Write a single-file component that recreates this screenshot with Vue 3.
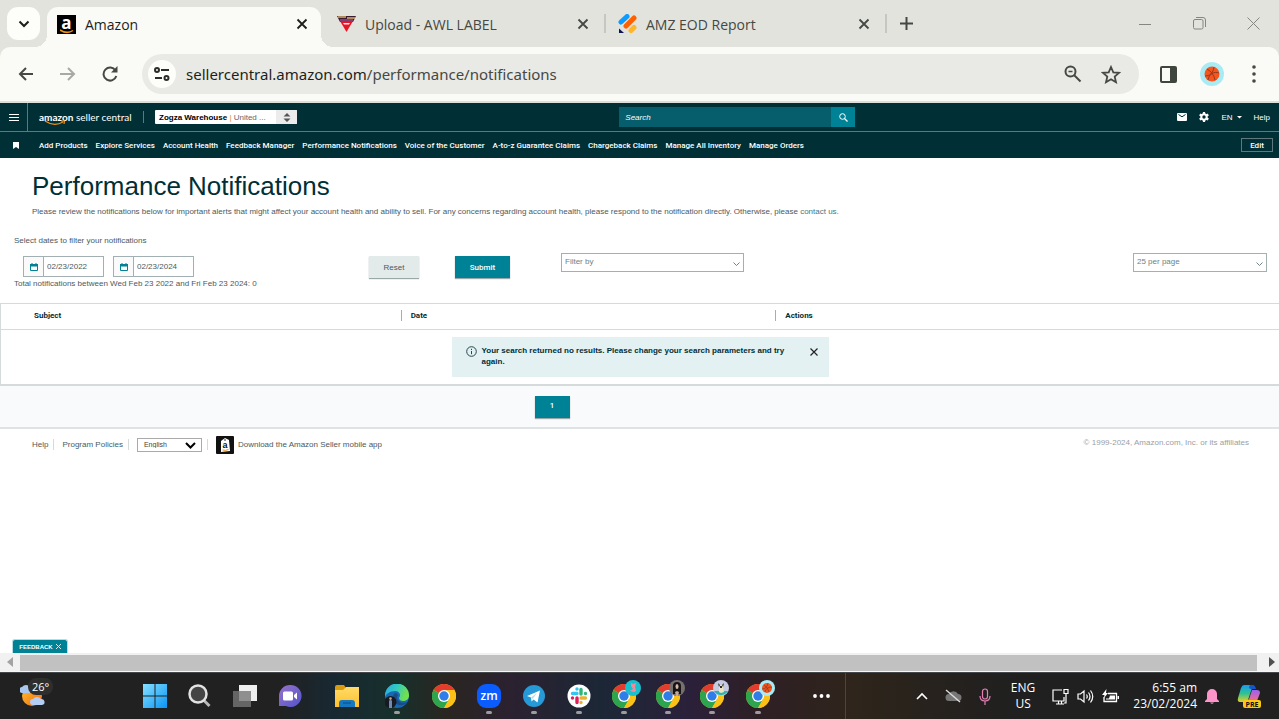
<script setup>
import { ref } from 'vue'

const navLinks = [
  'Add Products', 'Explore Services', 'Account Health', 'Feedback Manager',
  'Performance Notifications', 'Voice of the Customer', 'A-to-z Guarantee Claims',
  'Chargeback Claims', 'Manage All Inventory', 'Manage Orders'
]
const profiles = ['pig', 'girl', 'dog', 'ball']
const url = ref('sellercentral.amazon.com/performance/notifications')
const fromDate = ref('02/23/2022')
const toDate = ref('02/23/2024')
</script>

<template>
  <div class="screen">
    <header class="tabs">
      <button class="tab-search" aria-label="Search tabs">
        <svg width="12" height="8" viewBox="0 0 12 8"><path d="M1.5 1.5 6 6l4.500-4.500" fill="none" stroke="#1d1f1c" stroke-width="2" /></svg>
      </button>
      <div class="tab active">
        <span class="fav-a">a<svg width="15" height="5" viewBox="0 0 15 5"><path d="M0 1Q7 5.500 13 1.500" fill="none" stroke="#f29111" stroke-width="1.500" /></svg></span>
        <span class="tab-title">Amazon</span>
        <button class="x" aria-label="Close tab"><svg width="12" height="12" viewBox="0 0 12 12"><path d="m1.500 1.500 9 9m0-9-9 9" stroke="#1d1f1c" stroke-width="1.800" /></svg></button>
      </div>
      <div class="tab second">
        <svg class="fav" width="19" height="19" viewBox="0 0 19 19"><path d="M0 1h19l-3 6H3z" fill="#3b1c2e" /><path d="M1 2h8M10 3h8" stroke="#d8b072" stroke-width="1.500" /><path d="M3 5h13" stroke="#b455a0" stroke-width="1.200" /><path d="M3 6h13l-6.500 11z" fill="#ea1427" /><path d="M6 8h7l-1 1.500H7z" fill="#f7e9f0" /></svg>
        <span class="tab-title">Upload - AWL LABEL</span>
        <button class="x" aria-label="Close tab"><svg width="12" height="12" viewBox="0 0 12 12"><path d="m1.500 1.500 9 9m0-9-9 9" stroke="#454844" stroke-width="1.800" /></svg></button>
      </div>
      <i class="tab-sep"></i>
      <div class="tab third">
        <svg class="fav" width="19" height="20" viewBox="0 0 19 20"><g stroke-width="5" stroke-linecap="round"><path d="m3 8 6-5.500" stroke="#0c9cff" /><path d="m8 12 8-8" stroke="#ff6100" /><path d="m13 16.500 3-3" stroke="#ffb629" /></g><path d="M1 14.500 6 19H1z" fill="#0a1551" /></svg>
        <span class="tab-title">AMZ EOD Report</span>
        <button class="x" aria-label="Close tab"><svg width="12" height="12" viewBox="0 0 12 12"><path d="m1.500 1.500 9 9m0-9-9 9" stroke="#454844" stroke-width="1.800" /></svg></button>
      </div>
      <i class="tab-sep"></i>
      <button class="new-tab" aria-label="New tab"><svg width="13" height="13" viewBox="0 0 13 13"><path d="M6.500 0v13M0 6.500h13" stroke="#454844" stroke-width="2" /></svg></button>
      <div class="win">
        <button aria-label="Minimize"><svg width="13" height="13" viewBox="0 0 13 13"><path d="M0 7.500h12" stroke="#858682" /></svg></button>
        <button aria-label="Restore"><svg width="13" height="13" viewBox="0 0 13 13"><rect x="0.500" y="2.500" width="9.500" height="9.500" rx="1.500" fill="none" stroke="#858682" /><path d="M3 .5h7a2.500 2.500 0 0 1 2.500 2.500v7" fill="none" stroke="#858682" /></svg></button>
        <button aria-label="Close"><svg width="13" height="13" viewBox="0 0 13 13"><path d="m.5.500 12 12m0-12-12 12" stroke="#858682" /></svg></button>
      </div>
    </header>

    <div class="toolbar-back">
      <div class="toolbar">
        <button aria-label="Back"><svg width="16" height="14" viewBox="0 0 16 14"><path d="M15 7H2M8 1 2 7l6 6" fill="none" stroke="#454844" stroke-width="2" /></svg></button>
        <button aria-label="Forward"><svg width="16" height="14" viewBox="0 0 16 14"><path d="M0 7h14M8 1l6 6-6 6" fill="none" stroke="#a8a9a5" stroke-width="2" /></svg></button>
        <button class="reload" aria-label="Reload"><svg width="16" height="16" viewBox="0 0 16 16"><path d="M13.500 4.500A6.500 6.500 0 1 0 14.300 10" fill="none" stroke="#454844" stroke-width="2" /><path d="M15.500 0v6.500H9z" fill="#454844" /></svg></button>
        <div class="omnibox">
          <button class="site" aria-label="Site information"><svg width="16" height="14" viewBox="0 0 16 14"><g fill="none" stroke="#2b2d2a" stroke-width="2"><circle cx="3" cy="3" r="2" /><path d="M7 3h8M1 11h7" /><circle cx="12.500" cy="11" r="2" /></g></svg></button>
          <label class="url"><span>sellercentral.amazon.com</span>/performance/notifications<input v-model="url" aria-label="Address" /></label>
          <button aria-label="Zoom"><svg width="18" height="18" viewBox="0 0 18 18"><g fill="none" stroke="#454844" stroke-width="2"><circle cx="6.500" cy="6.500" r="5" /><path d="m10 10 6.500 6.500" /><path d="M4.500 6.500h4" stroke-width="1.500" /></g></svg></button>
          <button aria-label="Bookmark"><svg width="20" height="19" viewBox="0 0 20 19"><path d="m10 2 2.300 5.300 5.700.500-4.300 3.800 1.300 5.600-5-3-5 3 1.300-5.600L2 7.800l5.700-.5z" fill="none" stroke="#454844" stroke-width="1.800" /></svg></button>
        </div>
        <button class="panel" aria-label="Side panel"><svg width="17" height="17" viewBox="0 0 17 17"><rect x="1" y="1" width="15" height="15" rx="1" fill="none" stroke="#3f463e" stroke-width="2" /><path d="M10 1h6v15h-6z" fill="#3f463e" /></svg></button>
        <button class="avatar" aria-label="Profile"><svg width="24" height="24" viewBox="0 0 24 24"><circle cx="12" cy="12" r="12" fill="#a9ebf4" /><circle cx="12" cy="12" r="7.500" fill="#f4561d" /><path d="M5 14c5 0 8-3 9-9M8 18c1-6 6-9 11-7M7 7c4 2 7 6 8 11" fill="none" stroke="#8a3520" stroke-width="0.900" /></svg></button>
        <button class="kebab" aria-label="Menu"><svg width="4" height="18" viewBox="0 0 4 18"><g fill="#454844"><circle cx="2" cy="2" r="1.800" /><circle cx="2" cy="9" r="1.800" /><circle cx="2" cy="16" r="1.800" /></g></svg></button>
      </div>
    </div>

    <main class="page">
      <div class="sc-top">
        <button class="burger" aria-label="Menu"><svg width="10" height="7" viewBox="0 0 10 7"><path d="M0 .5h10M0 3.500h10M0 6.500h10" stroke="#fff" /></svg></button>
        <a class="logo" href="#"><b>amazon</b> seller central<svg width="22" height="6" viewBox="0 0 22 6"><path d="M1 1q9 6 18 1M17 1h3.500L20 4" fill="none" stroke="#f29111" stroke-width="1.200" /></svg></a>
        <i class="bar"></i>
        <button class="store"><span class="store-name"><b>Zogza Warehouse</b> <em>|</em> United ...</span><span class="updown"><svg width="8" height="9" viewBox="0 0 8 9"><path d="M4 0l3.500 3.500h-7zM4 9 .5 5.500h7z" fill="#555" /></svg></span></button>
        <form class="search" @submit.prevent>
          <input placeholder="Search" aria-label="Search" />
          <button aria-label="Submit search"><svg width="9" height="9" viewBox="0 0 9 9"><circle cx="3.500" cy="3.500" r="2.800" fill="none" stroke="#fff" /><path d="m5.500 5.500 3 3" stroke="#fff" stroke-width="1.200" /></svg></button>
        </form>
        <div class="tools">
          <a href="#" aria-label="Messages"><svg width="10" height="8" viewBox="0 0 10 8"><rect width="10" height="8" rx="1" fill="#fff" /><path d="m1.500 1.500 3.500 2.300 3.500-2.300" fill="none" stroke="#002f36" /></svg></a>
          <a href="#" aria-label="Settings"><svg width="10" height="10" viewBox="0 0 10 10"><circle cx="5" cy="5" r="2.700" fill="none" stroke="#fff" stroke-width="2" /><path d="M5 0v2M5 8v2M.7 2.500l1.700 1M7.600 6.500l1.700 1M.7 7.500l1.700-1M7.600 3.500l1.700-1" stroke="#fff" stroke-width="2.200" /></svg></a>
          <button class="lang">EN <svg width="5" height="3" viewBox="0 0 5 3"><path d="M0 0h5L2.500 2.500z" fill="#fff" /></svg></button>
          <a href="#">Help</a>
        </div>
      </div>
      <nav class="sc-nav">
        <span class="mark"><svg width="6" height="7" viewBox="0 0 6 7"><path d="M0 0h6v7L3 5 0 7z" fill="#fff" /></svg></span>
        <a v-for="l in navLinks" :key="l" href="#">{{ l }}</a>
        <button class="edit">Edit</button>
      </nav>

      <section class="intro">
        <h1>Performance Notifications</h1>
        <p>Please review the notifications below for important alerts that might affect your account health and ability to sell. For any concerns regarding account health, please respond to the notification directly. Otherwise, please <a href="#">contact us.</a></p>
      </section>

      <section class="filters">
        <p>Select dates to filter your notifications</p>
        <div class="filter-row">
          <label class="date"><span><svg width="8" height="8" viewBox="0 0 8 8"><path d="M.5 1.500h7v6h-7z" fill="none" stroke="#008296" /><path d="M0 1h8v2.500H0zM1.500 0h1v1h-1zM5.500 0h1v1h-1z" fill="#008296" /></svg></span><input v-model="fromDate" aria-label="From date" /></label>
          <label class="date"><span><svg width="8" height="8" viewBox="0 0 8 8"><path d="M.5 1.500h7v6h-7z" fill="none" stroke="#008296" /><path d="M0 1h8v2.500H0zM1.500 0h1v1h-1zM5.500 0h1v1h-1z" fill="#008296" /></svg></span><input v-model="toDate" aria-label="To date" /></label>
          <button class="btn reset">Reset</button>
          <button class="btn submit">Submit</button>
          <div class="pick filter-by"><select aria-label="Filter by"><option>Filter by</option></select><svg width="7" height="5" viewBox="0 0 7 5"><path d="m.5.500 3 3 3-3" fill="none" stroke="#6f8388" /></svg></div>
          <div class="pick per-page"><select aria-label="Results per page"><option>25 per page</option></select><svg width="7" height="5" viewBox="0 0 7 5"><path d="m.5.500 3 3 3-3" fill="none" stroke="#6f8388" /></svg></div>
        </div>
        <p class="total">Total notifications between Wed Feb 23 2022 and Fri Feb 23 2024: 0</p>
      </section>

      <table>
        <thead><tr><th class="c1">Subject</th><th class="c2"><span>Date</span></th><th><span>Actions</span></th></tr></thead>
        <tbody><tr><td colspan="3">
          <div class="alert">
            <svg width="11" height="11" viewBox="0 0 11 11"><circle cx="5.500" cy="5.500" r="4.800" fill="none" stroke="#254850" /><path d="M5.500 5v3.200M5.500 2.800v1.200" stroke="#254850" /></svg>
            <strong>Your search returned no results. Please change your search parameters and try again.</strong>
            <button aria-label="Dismiss"><svg width="8" height="8" viewBox="0 0 8 8"><path d="m.5.500 7 7m0-7-7 7" stroke="#222" stroke-width="1.200" /></svg></button>
          </div>
        </td></tr></tbody>
      </table>
      <div class="pager"><button class="btn submit current">1</button></div>

      <footer class="foot">
        <a href="#">Help</a><i></i>
        <a href="#">Program Policies</a><i></i>
        <div class="pick english"><select aria-label="Language"><option>English</option></select><svg width="11" height="7" viewBox="0 0 11 7"><path d="m1 1 4.500 4.500L10 1" fill="none" stroke="#000" stroke-width="2" /></svg></div><i></i>
        <a class="app" href="#"><svg width="18" height="18" viewBox="0 0 18 18"><rect width="18" height="18" rx="1" fill="#111" /><path d="m5 5 4-3 4 2 1 11-9 1z" fill="#fff" /><circle cx="9" cy="4" r="0.800" fill="#111" /><text x="6.500" y="12" font-family="Liberation Sans, sans-serif" font-size="9" font-weight="700" fill="#111">a</text><path d="M6.500 14q3 1 6-.5" fill="none" stroke="#f29111" /></svg>Download the Amazon Seller mobile app</a>
        <span class="copy">© 1999-2024, Amazon.com, Inc. or its affiliates</span>
      </footer>
      <button class="feedback">FEEDBACK <svg width="5" height="5" viewBox="0 0 5 5"><path d="m0 0 5 5m0-5L0 5" stroke="#cfe9ec" /></svg></button>
    </main>

    <div class="hscroll">
      <button aria-label="Scroll left"><svg width="6" height="10" viewBox="0 0 6 10"><path d="M6 0v10L0 5z" fill="#a3a3a3" /></svg></button>
      <div class="thumb"></div>
      <button class="right" aria-label="Scroll right"><svg width="6" height="10" viewBox="0 0 6 10"><path d="M0 0v10l6-5z" fill="#505050" /></svg></button>
    </div>

    <div class="taskbar">
      <svg width="0" height="0" class="defs">
        <defs>
          <linearGradient id="win" x2="1" y2="1"><stop stop-color="#86e0ff" /><stop offset="1" stop-color="#0a94f5" /></linearGradient>
          <linearGradient id="edge" x2="1" y2="0.300"><stop stop-color="#2aa8e0" /><stop offset="0.500" stop-color="#30c8c4" /><stop offset="1" stop-color="#72e04c" /></linearGradient>
          <linearGradient id="sun" x2="1" y2="1"><stop stop-color="#ffc02e" /><stop offset="1" stop-color="#ef6b12" /></linearGradient>
          <linearGradient id="chat" x2="1" y2="1"><stop stop-color="#9a72c8" /><stop offset="1" stop-color="#4f55cd" /></linearGradient>
          <linearGradient id="fold" x2="0" y2="1"><stop stop-color="#ffdb68" /><stop offset="1" stop-color="#ffc02b" /></linearGradient>
          <linearGradient id="cop" x2="0" y2="1"><stop stop-color="#189cf0" /><stop offset="0.500" stop-color="#2fc290" /><stop offset="1" stop-color="#e8cf2a" /></linearGradient>
          <linearGradient id="cop2" x2="0" y2="1"><stop stop-color="#9a62ee" /><stop offset="1" stop-color="#f36b8d" /></linearGradient>
          <symbol id="chrome" viewBox="0 0 24 24">
            <circle cx="12" cy="12" r="12" fill="#fbc116" />
            <path d="M12 12 1.600 6A12 12 0 0 1 22.400 6z" fill="#e33b2e" />
            <path d="M1.600 6A12 12 0 0 0 12 24l5.200-9L12 12z" fill="#2da44e" />
            <path d="M12 6h10.400A12 12 0 0 1 12 24l5.200-9z" fill="#fbc116" />
            <circle cx="12" cy="12" r="6" fill="#fff" /><circle cx="12" cy="12" r="4.700" fill="#2f7de9" />
          </symbol>
        </defs>
      </svg>
      <button class="weather" aria-label="Weather"><svg width="26" height="24" viewBox="0 0 26 24"><circle cx="12" cy="12" r="10" fill="url(#sun)" /><path d="M3 9a3 3 0 0 1-1-6 5 5 0 0 1 8 0v6z" fill="#a9c6f0" /><path d="M13 21a3 3 0 0 1 0-6 5 5 0 0 1 8 0 3 3 0 0 1 1 6z" fill="#b3cdf5" /></svg><span>26°</span></button>
      <div class="apps">
        <button aria-label="Start"><svg width="24" height="24" viewBox="0 0 24 24"><path d="M0 0h11.500v11.500H0zM12.500 0H24v11.500H12.500zM0 12.500h11.500V24H0zM12.500 12.500H24V24H12.500z" fill="url(#win)" /></svg></button>
        <button aria-label="Search"><svg width="24" height="24" viewBox="0 0 24 24"><path d="m15.500 16 6 6" stroke="#b9b9b9" stroke-width="3" /><circle cx="10" cy="10" r="8.500" fill="#444" stroke="#e2e2e2" stroke-width="2.500" /></svg></button>
        <button aria-label="Task view"><svg width="24" height="24" viewBox="0 0 24 24"><path d="M6 1h18v16H6z" fill="#efefef" /><path d="M0 7h18v16H0z" fill="#777" fill-opacity="0.800" /></svg></button>
        <button aria-label="Chat"><svg width="24" height="24" viewBox="0 0 24 24"><path d="M12 1a11 11 0 1 1-4 21H1V12A11 11 0 0 1 12 1z" fill="url(#chat)" /><rect x="5" y="7.500" width="10" height="9" rx="1.500" fill="#fff" /><path d="m16 11 3-2.500v7L16 13z" fill="#fff" /></svg></button>
        <button class="folder" aria-label="File Explorer"><svg width="24" height="24" viewBox="0 0 24 24"><path d="M0 3q0-2 2-2h7l2 3v4H0z" fill="#d99b0f" /><path d="M0 6h8l3-3h13v20H0z" fill="url(#fold)" /><path d="M4 23v-4q0-3 3-3h10q3 0 3 3v4z" fill="#1577bf" /><path d="M8 19h8" stroke="#0a5b9b" stroke-width="1.500" /></svg></button>
        <button class="edge on" aria-label="Edge"><svg width="24" height="24" viewBox="0 0 24 24"><circle cx="12" cy="12" r="12" fill="#1769b7" /><path d="M0 11a12 12 0 0 1 24 1c0 3-3 5-6 5-2 0-4-1-4-3 0-1 1-1 1-3 0-2-2-4-5-4C5 7 1 10 0 13z" fill="url(#edge)" /><path d="M10 9c-4 3-2 11 4 12 4 1 7-1 8-3-4 2-9 0-10-4q0-2 1-3-1-2-3-2z" fill="#1b4b85" /><circle cx="5.500" cy="18" r="6" fill="#171a20" /><path d="M4 24v-7l1.500-2L7 17v7z" fill="#6d8bb3" /><circle cx="5.500" cy="14.500" r="1.300" fill="#d6a286" /></svg></button>
        <button class="chrome" aria-label="Chrome"><svg width="24" height="24"><use href="#chrome" /></svg></button>
        <button class="on" aria-label="Zoom"><svg width="24" height="24" viewBox="0 0 24 24"><rect width="24" height="24" rx="9" fill="#0b5cff" /><text x="12" y="15.500" text-anchor="middle" font-family="Open Sans, sans-serif" font-size="12" font-weight="600" fill="#fff">zm</text></svg></button>
        <button class="on" aria-label="Telegram"><svg width="24" height="24" viewBox="0 0 24 24"><circle cx="12" cy="12" r="11" fill="#2699d6" /><path d="m5 12 13-5.500-2.500 12-4-3-2 2-.5-4z" fill="#fff" /><path d="m9 13.500 6-4.500-4.500 6z" fill="#b7d9ea" /></svg></button>
        <button class="on" aria-label="Slack"><svg width="24" height="24" viewBox="0 0 24 24"><circle cx="12" cy="12" r="11.500" fill="#fff" /><g stroke-width="3.400" stroke-linecap="round"><path d="M10 5v0M5.500 9.500H10" stroke="#36c5f0" /><path d="M14 5.500V10M18.500 9.500v0" stroke="#2eb67d" /><path d="M14 18.500v0M14 14h4.500" stroke="#ecb22e" /><path d="M10 14v4.500M5.500 14v0" stroke="#e01e5a" /></g></svg></button>
        <button v-for="p in profiles" :key="p" class="on profile" :class="p" aria-label="Chrome profile">
          <svg width="24" height="24"><use href="#chrome" /></svg>
          <svg class="badge" width="16" height="16" viewBox="0 0 16 16">
            <g v-if="p === 'pig'"><circle cx="8" cy="8" r="8" fill="#18bfcd" /><path d="m6 3 2 1 3-1-1 4 1 4-2 1-4-1 3-2-2-3z" fill="#f08b9b" /></g>
            <g v-else-if="p === 'girl'"><circle cx="8" cy="8" r="8" fill="#77706c" /><path d="M4 14V6q0-4 4-4t4 4v8z" fill="#151316" /><ellipse cx="8" cy="6.500" rx="1.500" ry="2.500" fill="#d8b8a6" /><path d="m6 12 2-1 2 1-1 4H7z" fill="#c3a79a" /></g>
            <g v-else-if="p === 'dog'"><circle cx="8" cy="8" r="8" fill="#c5cbe0" /><path d="M1 11h14a8 8 0 0 1-14 0z" fill="#2cb5b0" /><path d="m6 4 1 1h2l1-1v3l1 5-3 1-2-1z" fill="#ece2bf" /><path d="m5 3 2 2-1 2zM11 3 9 5l1 2zM7 6h2v2H7z" fill="#2a2a26" /></g>
            <g v-else><circle cx="8" cy="8" r="8" fill="#a9ebf4" /><circle cx="8" cy="8" r="5" fill="#ef551f" /><path d="M3 9q5 0 6-6M6 12q1-5 7-5M5 5q4 2 5 7" fill="none" stroke="#8a3520" stroke-width="0.700" /></g>
          </svg>
        </button>
      </div>
      <button class="more" aria-label="More"><svg width="17" height="4" viewBox="0 0 17 4"><g fill="#fff"><circle cx="2" cy="2" r="1.900" /><circle cx="8.500" cy="2" r="1.900" /><circle cx="15" cy="2" r="1.900" /></g></svg></button>
      <i class="split"></i>
      <div class="tray">
        <button aria-label="Show hidden icons"><svg width="12" height="8" viewBox="0 0 12 8"><path d="m1 7 5-5 5 5" fill="none" stroke="#fff" stroke-width="1.600" /></svg></button>
        <button class="cloud" aria-label="OneDrive"><svg width="17" height="14" viewBox="0 0 17 14"><path d="M4 12a3.500 3.500 0 0 1 0-7 5 5 0 0 1 9 0 3.500 3.500 0 0 1 0 7z" fill="#777" /><path d="m1 1 14 12" stroke="#ddd" stroke-width="1.400" /></svg></button>
        <button class="mic" aria-label="Microphone"><svg width="12" height="17" viewBox="0 0 12 17"><g fill="none" stroke="#e580b4" stroke-width="1.200"><rect x="3.500" y="1" width="5" height="10" rx="2.500" /><path d="M1 8q0 5 5 5t5-5M6 13v4" /></g></svg></button>
        <button class="stack kbd">ENG<br>US</button>
        <button class="net" aria-label="Network"><svg width="17" height="17" viewBox="0 0 17 17"><g fill="none" stroke="#fff" stroke-width="1.200"><path d="M10 2H1v11h11V9M4 16h8M6.500 13v3M9.500 13v3" /><path d="M12 1.500h4v4h-4zM14 6v9h-2" /></g></svg></button>
        <button aria-label="Volume"><svg width="17" height="15" viewBox="0 0 17 15"><g fill="none" stroke="#fff" stroke-width="1.200"><path d="M1 5h2.500L7 2v11L3.500 10H1zM9.500 5.500q1.500 2 0 4M11.500 3.500q3 4 0 8M13.500 1.500q4.500 6 0 12" /></g></svg></button>
        <button aria-label="Battery"><svg width="17" height="14" viewBox="0 0 17 14"><path d="M6 4.500h8.500v8H2V8" fill="none" stroke="#fff" stroke-width="1.300" /><path d="M8 6.500h5v4H4V9.500h3zM15.500 7H17v3h-1.500zM4.500 0 0 6h2.500L2 9l4-5H4z" fill="#fff" /></svg></button>
        <button class="stack clock">6:55 am<br>23/02/2024</button>
        <button aria-label="Notifications"><svg width="14" height="16" viewBox="0 0 14 16"><path d="M2 11V6a5 5 0 0 1 10 0v5l2 2v1H0v-1z" fill="#ff94cb" /><path d="M5 14.500h4q-2 2.500-4 0z" fill="#ff94cb" /></svg></button>
        <button class="copilot" aria-label="Copilot"><svg width="24" height="24" viewBox="0 0 24 24"><path d="M7 1h7q2 0 1 3l-4 12q-1 2-3 2H3q-3 0-2-4l3-10q1-3 3-3z" fill="url(#cop)" /><path d="M13 1h3q2 0 3 4h-5q-2 0-2-2z" fill="#1657c8" /><path d="M15 6h5q3 0 3 3l-3 8H9l3-2z" fill="url(#cop2)" /><rect x="6" y="16" width="18" height="8" rx="2" fill="#ffc70d" /><text x="15" y="22.500" text-anchor="middle" font-family="Open Sans, sans-serif" font-size="7" font-weight="700" fill="#111">PRE</text></svg></button>
      </div>
    </div>
  </div>
</template>

<style>
html, body { margin: 0; overflow: hidden; }
</style>

<style scoped>
.screen { height: 100vh; display: flex; flex-direction: column; overflow: hidden; font-family: "Liberation Sans", Arial, sans-serif; font-size: 8px; color: #4a5a5f; background: #fff; }
.screen * { box-sizing: border-box; }
button { border: 0; padding: 0; margin: 0; background: none; font: inherit; color: inherit; display: flex; align-items: center; justify-content: center; flex: none; }
input, select { border: 0; padding: 0; margin: 0; font: inherit; color: inherit; background: none; appearance: none; border-radius: 0; outline: 0; min-width: 0; }
a { color: inherit; text-decoration: none; }
svg { display: block; flex: none; }
h1, p { margin: 0; font-weight: 400; }

.tabs { height: 47px; flex: none; background: #e2e3dd; display: flex; align-items: center; font-family: "Open Sans", "Noto Sans", sans-serif; font-size: 14px; color: #454844; }
.tab-search { position: relative; z-index: 1; width: 33px; height: 33px; margin-left: 7px; border-radius: 11px; background: #fdfdf9; }
.tab { height: 40px; align-self: flex-end; display: flex; align-items: center; padding-bottom: 6px; }
.active { position: relative; width: 274px; margin-left: 7px; padding-left: 10px; padding-right: 13px; border-radius: 11px 11px 0 0; background: #fafaf6; color: #1d1f1c; }
.active::before, .active::after { content: ""; position: absolute; bottom: 0; width: 12px; height: 12px; }
.active::before { left: -12px; background: radial-gradient(circle at 0 0, #e2e3dd 12px, #fafaf6 12px); }
.active::after { right: -12px; background: radial-gradient(circle at 100% 0, #e2e3dd 12px, #fafaf6 12px); }
.second { width: 283px; padding-left: 16px; padding-right: 15px; }
.third { width: 279px; padding-left: 12px; padding-right: 15px; }
.tab-title { flex: 1; margin-left: 9px; white-space: nowrap; }
.tab-sep { width: 2px; height: 19px; background: #c6c7c2; }
.fav-a { position: relative; width: 19px; height: 19px; background: #000; color: #fff; font: 700 17px/15px "Open Sans", sans-serif; text-align: center; }
.fav-a svg { position: absolute; left: 3px; bottom: 0; }
.new-tab { margin-left: 13px; }
.win { margin-left: auto; margin-right: 19px; display: flex; gap: 41px; }

.toolbar-back { flex: none; background: #e2e3dd; }
.toolbar { height: 56px; display: flex; align-items: center; padding: 0 23px 0 18px; border-bottom: 2px solid #dddfd9; border-radius: 10px 10px 0 0; background: #fafaf6; }
.toolbar > button { margin-right: 26px; }
.omnibox { flex: 1; height: 40px; margin-right: 21px; padding: 0 18px 0 6px; display: flex; align-items: center; gap: 19px; border-radius: 20px; background: #e9eae5; }
.toolbar > .reload { margin-right: 24px; }
.site { width: 28px; height: 28px; border-radius: 14px; background: #fdfdf9; }
.url { position: relative; flex: 1; margin-left: -9px; font: 15px "Noto Sans", sans-serif; color: #454844; white-space: nowrap; }
.url span { color: #1d1f1c; }
.url input { position: absolute; inset: 0; width: 100%; opacity: 0; }
.toolbar > .panel { margin-right: 23px; }
.toolbar > .avatar { margin-right: 28px; }
.toolbar > .kebab { margin-right: 0; }

.page { flex: 1; min-height: 0; display: flex; flex-direction: column; position: relative; }
.sc-top { height: 29px; flex: none; display: flex; align-items: center; background: #002f36; border-bottom: 1px solid #60787c; color: #fff; }
.burger { width: 28px; align-self: stretch; border-right: 1px solid #60787c; }
.logo { position: relative; margin-left: 11px; width: 94px; font: 10px/14px Lato, sans-serif; white-space: nowrap; }
.logo b { font-weight: 700; }
.logo svg { position: absolute; left: 5px; top: 10px; }
.bar { width: 1px; height: 12px; margin-left: 10px; background: #60787c; }
.store { width: 142px; height: 14px; margin-left: 11px; border-radius: 1px; overflow: hidden; background: #fff; justify-content: flex-start; color: #666; }
.store-name { flex: 1; text-align: left; padding-left: 4px; white-space: nowrap; }
.store-name b { color: #000; }
.store-name em { color: #e08a1e; font-style: normal; }
.updown { width: 21px; align-self: stretch; display: flex; align-items: center; justify-content: center; background: #ececec; }
.search { width: 236px; height: 20px; margin-left: 25.200%; display: flex; }
.search input { flex: 1; padding: 0 6px; background: #065e6c; font-size: 8px; font-style: italic; color: #fff; }
.search input::placeholder { color: #fff; opacity: 1; }
.search button { width: 24px; background: #008296; }
.tools { margin-left: auto; margin-right: 9px; display: flex; align-items: center; gap: 12px; font-weight: 400; }
.lang { gap: 4px; }
.sc-nav { height: 26px; flex: none; display: flex; align-items: center; gap: 8px; padding-right: 6px; background: #002f36; color: #fff; font-family: Roboto, sans-serif; font-weight: 500; white-space: nowrap; }
.mark { width: 31px; display: flex; justify-content: center; }
.edit { width: 32px; height: 14px; margin-left: auto; border: 1px solid #60787c; }

.intro { flex: none; padding: 12px 32px 0; }
.intro h1 { font-size: 26px; line-height: 32px; color: #002f36; }
.intro p { margin-top: 4px; line-height: 11px; }
.intro a { color: #45767c; }
.filters { flex: none; padding: 18px 12px 0 14px; }
.filters p { line-height: 12px; }
.filter-row { display: flex; align-items: flex-start; margin-top: 6px; padding-left: 9px; }
.date { width: 81px; height: 21px; margin: 3px 9px 0 0; display: flex; border: 1px solid #a2b0b3; }
.date span { width: 20px; display: flex; align-items: center; justify-content: center; border-right: 1px solid #a2b0b3; background: #fafafa; }
.date input { flex: 1; width: 0; padding-left: 3px; }
.btn { height: 22px; margin-top: 3px; box-shadow: 0 1px 1px #9aa8aa; }
.reset { width: 50px; margin-left: 166px; background: #e2eaea; }
.submit { width: 55px; margin-left: 36px; background: #008296; color: #fff; font-family: Roboto, sans-serif; font-weight: 500; }
.pick { position: relative; height: 19px; border: 1px solid #a2b0b3; color: #68838b; }
.pick select { width: 100%; height: 100%; padding: 0 4px 2px 3px; }
.pick svg { position: absolute; right: 3px; top: 8px; pointer-events: none; }
.filter-by { width: 183px; margin-left: 51px; }
.per-page { width: 134px; margin-left: auto; }

table { flex: none; width: 100%; margin-top: 13px; border-collapse: collapse; table-layout: fixed; border: 1px solid #d5dbdb; border-right: 0; border-bottom-width: 2px; }
th { height: 26px; padding: 0; text-align: left; font-family: Roboto, sans-serif; font-weight: 700; color: #002f36; border-bottom: 1px solid #d5dbdb; line-height: 11px; padding-bottom: 2px; }
.c1 { width: 31.300%; padding-left: 33px; }
.c2 { width: 29.300%; }
th span { display: block; border-left: 1px solid #a2b0b3; padding-left: 9px; }
td { padding: 7px 0; }
.alert { width: 377px; height: 40px; margin: 0 auto; padding: 8px 11px 0 14px; display: flex; align-items: flex-start; background: #e3f1f2; color: #002f36; }
.alert > svg { margin-top: 1px; }
.alert strong { flex: 1; margin-left: 5px; padding-right: 16px; line-height: 11px; }
.alert button { margin-top: 3px; }
.pager { flex: none; height: 43px; padding: 7px 0 0 41.800%; background: #f9fafb; border-bottom: 2px solid #e0e3e4; }
.current { width: 35px; margin-left: 0; padding-bottom: 3px; }

.foot { flex: none; height: 31px; padding: 0 30px 0 32px; display: flex; align-items: center; }
.foot i { width: 1px; height: 11px; margin: 0 8px 0 5px; background: #d5dbdb; }
.english { width: 65px; height: 14px; border-color: #aaa; color: #444; font-size: 7px; }
.english select { padding: 0 6px; }
.english svg { right: 5px; top: 3px; }
.app { display: flex; align-items: center; gap: 4px; }
.copy { margin-left: auto; padding-bottom: 4px; color: #9aa0a3; }
.feedback { position: absolute; left: 12px; bottom: 0; width: 56px; height: 14px; gap: 3px; border: 1px solid #b6dde2; border-bottom: 0; border-radius: 3px 3px 0 0; background: #008296; color: #fff; font-size: 6px; font-weight: 700; }

.hscroll { height: 19px; flex: none; display: flex; background: #f1f1f1; border-bottom: 1px solid #f6f6f6; }
.hscroll button { width: 20px; }
.hscroll .right { padding-left: 5px; }
.thumb { flex: 1; margin: 2px 2px 0 0; background: #c1c1c1; }

.taskbar { height: 47px; flex: none; display: flex; align-items: stretch; color: #fff; font-family: "Open Sans", "Noto Sans", sans-serif; font-size: 12px; border-top: 1px solid #44484a; background: linear-gradient(90deg, #212121 22%, #182832 26%, #17302b 31%, #2a2521 35%, #2b2130 40%, #1c2736 47%, #2b203a 54%, #2e1f25 59%, #2e251b 67%, #24211e 75%, #202020 79%); }
.defs { position: absolute; }
.weather { position: relative; width: 133px; justify-content: flex-start; padding-left: 20px; }
.weather span { position: absolute; left: 28px; top: 5px; padding: 0 4px; border-radius: 8px; background: #2e2e2e; font-size: 11px; line-height: 17px; }
.apps { display: flex; gap: 1px; }
.apps button { position: relative; width: 44px; }
.apps .on::after { content: ""; position: absolute; left: 19px; bottom: 5px; width: 6px; height: 3px; border-radius: 2px; background: #9c9ca0; }
.apps .folder { margin-left: 12px; }
.apps .edge { margin-left: 5px; }
.apps .chrome { margin-left: 2px; }
.apps .girl, .apps .dog { margin-left: -1px; }
.apps .ball { margin-left: 1px; }
.badge { position: absolute; left: 23px; top: 7px; }
.more { width: 65px; padding-left: 17px; }
.split { width: 1px; margin-left: auto; background: #4c463f; }
.tray { width: 433px; flex: none; padding-right: 18px; display: flex; align-items: center; justify-content: flex-end; gap: 8px; }
.cloud { margin-left: 9px; }
.mic { margin-left: 9px; }
.stack { line-height: 16px; }
.kbd { display: block; margin: 0 9px 0 12px; text-align: center; }
.clock { display: block; margin-left: 6px; text-align: right; }
.copilot { margin-left: 10px; }
</style>
